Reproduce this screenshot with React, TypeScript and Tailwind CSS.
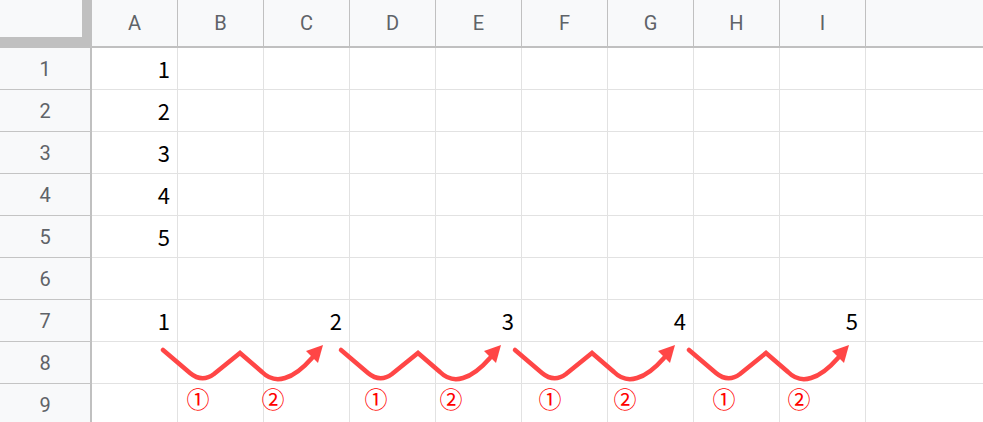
import React from "react";

const cols = ["A", "B", "C", "D", "E", "F", "G", "H", "I"];

const rows: { n: number; v: Record<string, string> }[] = [
  { n: 1, v: { A: "1" } },
  { n: 2, v: { A: "2" } },
  { n: 3, v: { A: "3" } },
  { n: 4, v: { A: "4" } },
  { n: 5, v: { A: "5" } },
  { n: 6, v: {} },
  { n: 7, v: { A: "1", C: "2", E: "3", G: "4", I: "5" } },
  { n: 8, v: {} },
  { n: 9, v: {} },
];

const hops = [163, 341, 515, 689];

function Hop({ x }: { x: number }) {
  return (
    <g transform={`translate(${x} 350)`}>
      <path
        d="M0 0 L27 23 Q39 33 51 24 L77 3 L99 22 Q109 32 122 28 C133 25 142 16 149 8"
        fill="none"
        stroke="#ff4646"
        strokeWidth={4.5}
        strokeLinecap="round"
        strokeLinejoin="miter"
      />
      <polygon points="160,-5 143,1 155,13" fill="#ff4646" />
      <text x={35} y={48} textAnchor="middle" dominantBaseline="central" fill="#ff0000" fontSize={23} fontFamily='"Noto Sans CJK JP", sans-serif'>
        ①
      </text>
      <text x={110} y={48} textAnchor="middle" dominantBaseline="central" fill="#ff0000" fontSize={23} fontFamily='"Noto Sans CJK JP", sans-serif'>
        ②
      </text>
    </g>
  );
}

export default function App() {
  return (
    <div className="relative w-[983px] h-[422px] overflow-hidden bg-white">
      {/* column headers */}
      <div className="flex h-[48px] border-b-2 border-[#c0c0c0] bg-[#f8f9fa] font-['Roboto',sans-serif] text-[20px] text-[#5f6368]">
        <div className="w-[92px] shrink-0 border-r-2 border-[#c0c0c0] bg-[#c0c0c0]">
          <div className="w-[82px] h-[37px] bg-[#f8f9fa]" />
        </div>
        {cols.map((c) => (
          <div key={c} className="w-[86px] shrink-0 border-r border-[#c0c0c0] flex items-center justify-center">
            {c}
          </div>
        ))}
        <div className="flex-1" />
      </div>

      {rows.map((r) => (
        <div key={r.n} className="flex h-[42px]">
          <div className="w-[92px] shrink-0 border-r-2 border-b border-r-[#c0c0c0] border-b-[#c4c4c4] bg-[#f8f9fa] flex items-center justify-center font-['Roboto',sans-serif] text-[20px] text-[#5f6368]">
            {r.n}
          </div>
          {cols.map((c) => (
            <div
              key={c}
              className="w-[86px] shrink-0 border-r border-b border-[#e2e2e2] flex items-end justify-end pr-[7px] pb-[10px] font-['Noto_Sans_CJK_JP',sans-serif] text-[22px] leading-none text-black"
            >
              {r.v[c] ?? ""}
            </div>
          ))}
          <div className="flex-1 border-b border-[#e2e2e2]" />
        </div>
      ))}

      {/* drawing layer */}
      <svg className="absolute inset-0 pointer-events-none" width={983} height={422} viewBox="0 0 983 422">
        {hops.map((x) => (
          <Hop key={x} x={x} />
        ))}
      </svg>
    </div>
  );
}
